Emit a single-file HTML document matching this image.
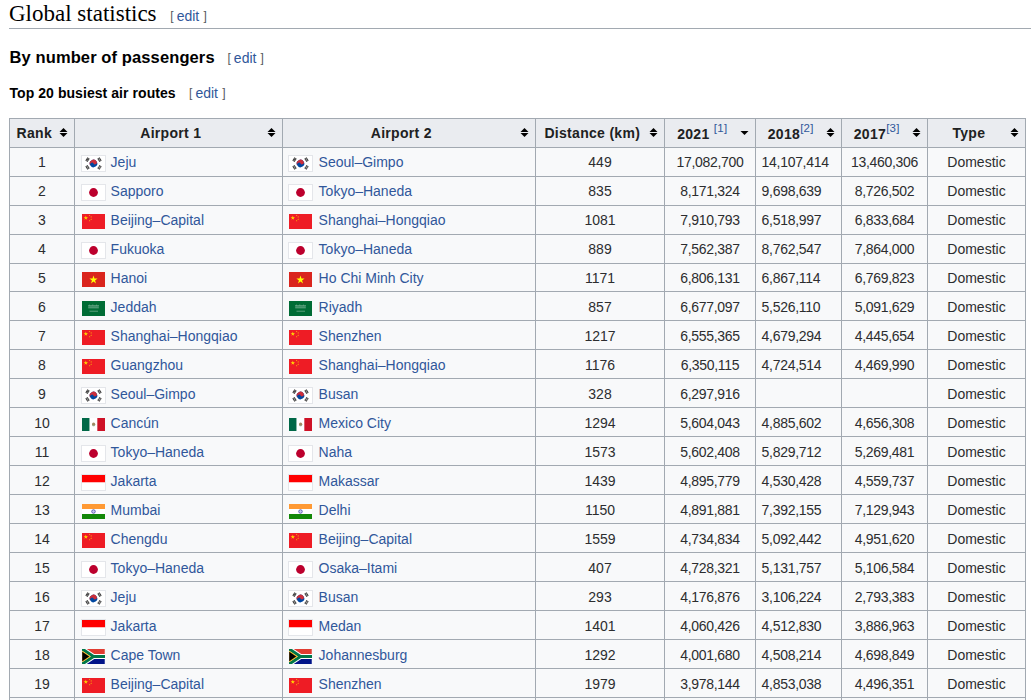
<!DOCTYPE html><html><head><meta charset="utf-8"><style>
html,body{margin:0;padding:0;background:#fff;}
body{width:1031px;height:700px;overflow:hidden;position:relative;font-family:"Liberation Sans",sans-serif;color:#202122;}
.h2{position:absolute;left:9px;top:0;width:1100px;height:28px;border-bottom:1px solid #a2a9b1;}
.h2 .t{position:absolute;left:0;top:0px;font-family:"Liberation Serif",serif;font-size:23px;line-height:28px;color:#000;white-space:nowrap;}
.es{position:absolute;font-size:14px;white-space:nowrap;color:#54595d;}
.es a{color:#30579a;text-decoration:none;}
.es .br{color:#54595d;font-size:12px;position:relative;top:-1px;}
.es .ed{margin-left:3px;}
.es .r{margin-left:4.2px;}
.h3{position:absolute;left:9.5px;top:45px;font-size:16.5px;letter-spacing:0.11px;font-weight:bold;color:#000;white-space:nowrap;line-height:24px;}
.h4{position:absolute;left:9.5px;top:83px;font-size:14px;letter-spacing:0.06px;font-weight:bold;color:#000;white-space:nowrap;line-height:20px;}
table{position:absolute;left:9px;top:117.85px;border-collapse:collapse;table-layout:fixed;width:1017px;background:#f8f9fa;font-size:14px;}
th,td{border:1px solid #a2a9b1;padding:0 5.6px;white-space:nowrap;overflow:hidden;}
th{background:#eaecf0;font-weight:bold;text-align:center;position:relative;padding-right:21px;height:27.94px;color:#202122;letter-spacing:0.3px;}
td{text-align:center;height:27.94px;line-height:22.4px;color:#2c2d2f;}
td.ap{text-align:left;}
td a{color:#30579a;text-decoration:none;}
.si{position:absolute;right:0;top:9.5px;}
.sd{position:absolute;right:0;top:12px;}
sup{font-size:11.5px;line-height:1;vertical-align:super;font-weight:normal;position:relative;top:-0.5px;}
sup a{color:#30579a;text-decoration:none;}
.fl{display:inline-block;width:25px;vertical-align:middle;position:relative;top:1px;margin-right:4px;}
.fl svg{display:block;margin:0 1px;}
.fl.b{width:23px;height:15px;border:1px solid #e4e6ea;}
.fl.b svg{margin:0;}
.num{letter-spacing:-0.3px;}
.c{position:relative;}
.o1{top:1px;}
.o2{top:2px;}
.fl.f1{top:2px;}
.a2 .c{margin-left:1px;}
td.l{text-align:left;}
.a3 .fl{margin-left:-1px;}
.a3 .c{margin-left:2px;}
</style></head><body>
<svg width="0" height="0" style="position:absolute">
<defs>
<symbol id="kr" viewBox="0 0 23 15">
<rect width="23" height="15" fill="#fff"/>
<g transform="rotate(-33.7 11.5 7.5)">
<circle cx="11.5" cy="7.5" r="3.75" fill="#0047a0"/>
<path d="M7.75 7.5 A3.75 3.75 0 0 1 11.5 3.75 A3.75 3.75 0 0 1 15.25 7.5 A1.875 1.875 0 0 1 13.375 9.375 A1.875 1.875 0 0 1 11.5 7.5 A1.875 1.875 0 0 0 9.625 5.625 A1.875 1.875 0 0 0 7.75 7.5Z" fill="#cd2e3a"/>
</g>
<g fill="#2a2a2a">
<g transform="translate(5.5 3.6) rotate(-56.3)"><rect x="-1.9" y="-1.3" width="3.8" height="0.78"/><rect x="-1.9" y="-0.39" width="3.8" height="0.78"/><rect x="-1.9" y="0.52" width="3.8" height="0.78"/></g>
<g transform="translate(17.5 3.6) rotate(56.3)"><rect x="-1.9" y="-1.3" width="3.8" height="0.78"/><rect x="-1.9" y="-0.39" width="1.7" height="0.78"/><rect x="0.2" y="-0.39" width="1.7" height="0.78"/><rect x="-1.9" y="0.52" width="3.8" height="0.78"/></g>
<g transform="translate(5.5 11.4) rotate(56.3)"><rect x="-1.9" y="-1.3" width="3.8" height="0.78"/><rect x="-1.9" y="-0.39" width="1.7" height="0.78"/><rect x="0.2" y="-0.39" width="1.7" height="0.78"/><rect x="-1.9" y="0.52" width="3.8" height="0.78"/></g>
<g transform="translate(17.5 11.4) rotate(-56.3)"><rect x="-1.9" y="-1.3" width="1.7" height="0.78"/><rect x="0.2" y="-1.3" width="1.7" height="0.78"/><rect x="-1.9" y="-0.39" width="1.7" height="0.78"/><rect x="0.2" y="-0.39" width="1.7" height="0.78"/><rect x="-1.9" y="0.52" width="1.7" height="0.78"/><rect x="0.2" y="0.52" width="1.7" height="0.78"/></g>
</g>
</symbol>
<symbol id="jp" viewBox="0 0 23 15">
<rect width="23" height="15" fill="#fff"/>
<circle cx="11.5" cy="7.5" r="4.4" fill="#bc002d"/>
</symbol>
<symbol id="cn" viewBox="0 0 23 15">
<rect width="23" height="15" fill="#ee1c25"/>
<path fill="#ffde00" d="M3.83 1.60 L4.35 3.19 L6.02 3.19 L4.67 4.17 L5.18 5.76 L3.83 4.78 L2.48 5.76 L2.99 4.17 L1.64 3.19 L3.31 3.19Z"/>
<path fill="#ffde00" d="M7.67 0.65 L7.86 1.24 L8.48 1.24 L7.98 1.60 L8.17 2.19 L7.67 1.82 L7.17 2.19 L7.36 1.60 L6.86 1.24 L7.48 1.24Z"/>
<path fill="#ffde00" d="M9.20 2.15 L9.39 2.74 L10.01 2.74 L9.51 3.10 L9.70 3.69 L9.20 3.32 L8.70 3.69 L8.89 3.10 L8.39 2.74 L9.01 2.74Z"/>
<path fill="#ffde00" d="M9.20 4.40 L9.39 4.99 L10.01 4.99 L9.51 5.35 L9.70 5.94 L9.20 5.57 L8.70 5.94 L8.89 5.35 L8.39 4.99 L9.01 4.99Z"/>
<path fill="#ffde00" d="M7.67 5.90 L7.86 6.49 L8.48 6.49 L7.98 6.85 L8.17 7.44 L7.67 7.07 L7.17 7.44 L7.36 6.85 L6.86 6.49 L7.48 6.49Z"/>
</symbol>
<symbol id="vn" viewBox="0 0 23 15">
<rect width="23" height="15" fill="#da251d"/>
<path fill="#ff0" d="M11.50 3.60 L12.47 6.57 L15.59 6.57 L13.06 8.41 L14.03 11.38 L11.50 9.54 L8.97 11.38 L9.94 8.41 L7.41 6.57 L10.53 6.57Z"/>
</symbol>
<symbol id="sa" viewBox="0 0 23 15">
<rect width="23" height="15" fill="#006c35"/>
<g fill="#fff" opacity="0.42">
<rect x="6" y="4.2" width="11" height="0.7"/>
<rect x="6.2" y="5.2" width="10.6" height="2.2" opacity="0.7"/>
<rect x="7" y="3.6" width="0.7" height="1.2"/>
<rect x="10.5" y="3.4" width="0.7" height="1.4"/>
<rect x="14" y="3.6" width="0.7" height="1.2"/>
</g>
<rect x="7.5" y="9.8" width="8.5" height="0.7" fill="#fff" opacity="0.5"/>
</symbol>
<symbol id="mx" viewBox="0 0 23 13">
<rect width="7.67" height="13" fill="#006847"/>
<rect x="7.67" width="7.66" height="13" fill="#fff"/>
<rect x="15.33" width="7.67" height="13" fill="#ce1126"/>
<circle cx="11.6" cy="6.2" r="1.6" fill="#8c6a3a" opacity="0.8"/>
<path d="M9.9 6.8 A1.7 1.7 0 0 0 13.3 6.8Z" fill="#7a9a78" opacity="0.52"/>
</symbol>
<symbol id="id" viewBox="0 0 23 15">
<rect width="23" height="7.5" fill="#ff0000"/>
<rect y="7.5" width="23" height="7.5" fill="#fff"/>
</symbol>
<symbol id="in" viewBox="0 0 23 15">
<rect width="23" height="5" fill="#ff9933"/>
<rect y="5" width="23" height="5" fill="#fff"/>
<rect y="10" width="23" height="5" fill="#138808"/>
<circle cx="11.5" cy="7.5" r="1.8" fill="#c8c8f0" stroke="#000080" stroke-width="0.5"/>
</symbol>
<symbol id="za" viewBox="0 0 90 60">
<rect width="90" height="30" fill="#e03c31"/>
<rect y="30" width="90" height="30" fill="#001489"/>
<path d="M-15 -10 L45 30 L-15 70 M45 30 H95" stroke="#fff" stroke-width="20" fill="none"/>
<path d="M-15 -10 L45 30 L-15 70 M45 30 H95" stroke="#007749" stroke-width="12" fill="none"/>
<path d="M0 7.2 L34.2 30 L0 52.8Z" fill="#ffb81c"/>
<path d="M0 11.4 L27.9 30 L0 48.6Z" fill="#000"/>
</symbol>
</defs></svg>
<div class="h2"><span class="t">Global statistics</span></div>
<div class="es" style="left:170.3px;top:8px;"><span class="br">[</span><a class="ed">edit</a><span class="br r">]</span></div>
<div class="h3">By number of passengers</div>
<div class="es" style="left:227.5px;top:50px;"><span class="br">[</span><a class="ed">edit</a><span class="br r">]</span></div>
<div class="h4">Top 20 busiest air routes</div>
<div class="es" style="left:189.1px;top:85px;"><span class="br">[</span><a class="ed">edit</a><span class="br r">]</span></div>
<table><colgroup><col style="width:65px"><col style="width:208px"><col style="width:253px"><col style="width:129px"><col style="width:91px"><col style="width:86px"><col style="width:86px"><col style="width:98px"></colgroup>
<tr><th>Rank<svg class="si" width="21" height="9" viewBox="0 0 21 9"><path d="M14.5 5l-4 4-4-4zM14.5 4l-4-4-4 4z"/></svg></th><th>Airport 1<svg class="si" width="21" height="9" viewBox="0 0 21 9"><path d="M14.5 5l-4 4-4-4zM14.5 4l-4-4-4 4z"/></svg></th><th>Airport 2<svg class="si" width="21" height="9" viewBox="0 0 21 9"><path d="M14.5 5l-4 4-4-4zM14.5 4l-4-4-4 4z"/></svg></th><th>Distance (km)<svg class="si" width="21" height="9" viewBox="0 0 21 9"><path d="M14.5 5l-4 4-4-4zM14.5 4l-4-4-4 4z"/></svg></th><th>2021 <sup><a>[1]</a></sup><svg class="sd" width="21" height="4" viewBox="0 0 21 4"><path d="M6.5 0h8l-4 4z"/></svg></th><th>2018<sup><a>[2]</a></sup><svg class="si" width="21" height="9" viewBox="0 0 21 9"><path d="M14.5 5l-4 4-4-4zM14.5 4l-4-4-4 4z"/></svg></th><th>2017<sup><a>[3]</a></sup><svg class="si" width="21" height="9" viewBox="0 0 21 9"><path d="M14.5 5l-4 4-4-4zM14.5 4l-4-4-4 4z"/></svg></th><th>Type<svg class="si" width="21" height="9" viewBox="0 0 21 9"><path d="M14.5 5l-4 4-4-4zM14.5 4l-4-4-4 4z"/></svg></th></tr>
<tr><td><span class="c o0">1</span></td><td class="ap a2"><span class="fl b"><svg width="23" height="15"><use href="#kr"/></svg></span><span class="c o0"><a>Jeju</a></span></td><td class="ap a3"><span class="fl b"><svg width="23" height="15"><use href="#kr"/></svg></span><span class="c o0"><a>Seoul–Gimpo</a></span></td><td><span class="c o0">449</span></td><td class="num"><span class="c o0">17,082,700</span></td><td class="num l"><span class="c o0">14,107,414</span></td><td class="num"><span class="c o0">13,460,306</span></td><td><span class="c o0">Domestic</span></td></tr>
<tr><td><span class="c o1">2</span></td><td class="ap a2"><span class="fl b"><svg width="23" height="15"><use href="#jp"/></svg></span><span class="c o1"><a>Sapporo</a></span></td><td class="ap a3"><span class="fl b"><svg width="23" height="15"><use href="#jp"/></svg></span><span class="c o1"><a>Tokyo–Haneda</a></span></td><td><span class="c o1">835</span></td><td class="num"><span class="c o1">8,171,324</span></td><td class="num l"><span class="c o1">9,698,639</span></td><td class="num"><span class="c o1">8,726,502</span></td><td><span class="c o1">Domestic</span></td></tr>
<tr><td><span class="c o1">3</span></td><td class="ap a2"><span class="fl"><svg width="23" height="15"><use href="#cn"/></svg></span><span class="c o1"><a>Beijing–Capital</a></span></td><td class="ap a3"><span class="fl"><svg width="23" height="15"><use href="#cn"/></svg></span><span class="c o1"><a>Shanghai–Hongqiao</a></span></td><td><span class="c o1">1081</span></td><td class="num"><span class="c o1">7,910,793</span></td><td class="num l"><span class="c o1">6,518,997</span></td><td class="num"><span class="c o1">6,833,684</span></td><td><span class="c o1">Domestic</span></td></tr>
<tr><td><span class="c o1">4</span></td><td class="ap a2"><span class="fl b"><svg width="23" height="15"><use href="#jp"/></svg></span><span class="c o1"><a>Fukuoka</a></span></td><td class="ap a3"><span class="fl b"><svg width="23" height="15"><use href="#jp"/></svg></span><span class="c o1"><a>Tokyo–Haneda</a></span></td><td><span class="c o1">889</span></td><td class="num"><span class="c o1">7,562,387</span></td><td class="num l"><span class="c o1">8,762,547</span></td><td class="num"><span class="c o1">7,864,000</span></td><td><span class="c o1">Domestic</span></td></tr>
<tr><td><span class="c o1">5</span></td><td class="ap a2"><span class="fl"><svg width="23" height="15"><use href="#vn"/></svg></span><span class="c o1"><a>Hanoi</a></span></td><td class="ap a3"><span class="fl"><svg width="23" height="15"><use href="#vn"/></svg></span><span class="c o1"><a>Ho Chi Minh City</a></span></td><td><span class="c o1">1171</span></td><td class="num"><span class="c o1">6,806,131</span></td><td class="num l"><span class="c o1">6,867,114</span></td><td class="num"><span class="c o1">6,769,823</span></td><td><span class="c o1">Domestic</span></td></tr>
<tr><td><span class="c o1">6</span></td><td class="ap a2"><span class="fl"><svg width="23" height="15"><use href="#sa"/></svg></span><span class="c o1"><a>Jeddah</a></span></td><td class="ap a3"><span class="fl"><svg width="23" height="15"><use href="#sa"/></svg></span><span class="c o1"><a>Riyadh</a></span></td><td><span class="c o1">857</span></td><td class="num"><span class="c o1">6,677,097</span></td><td class="num l"><span class="c o1">5,526,110</span></td><td class="num"><span class="c o1">5,091,629</span></td><td><span class="c o1">Domestic</span></td></tr>
<tr><td><span class="c o1">7</span></td><td class="ap a2"><span class="fl"><svg width="23" height="15"><use href="#cn"/></svg></span><span class="c o1"><a>Shanghai–Hongqiao</a></span></td><td class="ap a3"><span class="fl"><svg width="23" height="15"><use href="#cn"/></svg></span><span class="c o1"><a>Shenzhen</a></span></td><td><span class="c o1">1217</span></td><td class="num"><span class="c o1">6,555,365</span></td><td class="num l"><span class="c o1">4,679,294</span></td><td class="num"><span class="c o1">4,445,654</span></td><td><span class="c o1">Domestic</span></td></tr>
<tr><td><span class="c o1">8</span></td><td class="ap a2"><span class="fl"><svg width="23" height="15"><use href="#cn"/></svg></span><span class="c o1"><a>Guangzhou</a></span></td><td class="ap a3"><span class="fl"><svg width="23" height="15"><use href="#cn"/></svg></span><span class="c o1"><a>Shanghai–Hongqiao</a></span></td><td><span class="c o1">1176</span></td><td class="num"><span class="c o1">6,350,115</span></td><td class="num l"><span class="c o1">4,724,514</span></td><td class="num"><span class="c o1">4,469,990</span></td><td><span class="c o1">Domestic</span></td></tr>
<tr><td><span class="c o1">9</span></td><td class="ap a2"><span class="fl b"><svg width="23" height="15"><use href="#kr"/></svg></span><span class="c o1"><a>Seoul–Gimpo</a></span></td><td class="ap a3"><span class="fl b"><svg width="23" height="15"><use href="#kr"/></svg></span><span class="c o1"><a>Busan</a></span></td><td><span class="c o1">328</span></td><td class="num"><span class="c o1">6,297,916</span></td><td class="num l"><span class="c o1"></span></td><td class="num"><span class="c o1"></span></td><td><span class="c o1">Domestic</span></td></tr>
<tr><td><span class="c o1">10</span></td><td class="ap a2"><span class="fl"><svg width="23" height="13"><use href="#mx"/></svg></span><span class="c o1"><a>Cancún</a></span></td><td class="ap a3"><span class="fl"><svg width="23" height="13"><use href="#mx"/></svg></span><span class="c o1"><a>Mexico City</a></span></td><td><span class="c o1">1294</span></td><td class="num"><span class="c o1">5,604,043</span></td><td class="num l"><span class="c o1">4,885,602</span></td><td class="num"><span class="c o1">4,656,308</span></td><td><span class="c o1">Domestic</span></td></tr>
<tr><td><span class="c o1">11</span></td><td class="ap a2"><span class="fl b"><svg width="23" height="15"><use href="#jp"/></svg></span><span class="c o1"><a>Tokyo–Haneda</a></span></td><td class="ap a3"><span class="fl b"><svg width="23" height="15"><use href="#jp"/></svg></span><span class="c o1"><a>Naha</a></span></td><td><span class="c o1">1573</span></td><td class="num"><span class="c o1">5,602,408</span></td><td class="num l"><span class="c o1">5,829,712</span></td><td class="num"><span class="c o1">5,269,481</span></td><td><span class="c o1">Domestic</span></td></tr>
<tr><td><span class="c o1">12</span></td><td class="ap a2"><span class="fl b"><svg width="23" height="15"><use href="#id"/></svg></span><span class="c o1"><a>Jakarta</a></span></td><td class="ap a3"><span class="fl b"><svg width="23" height="15"><use href="#id"/></svg></span><span class="c o1"><a>Makassar</a></span></td><td><span class="c o1">1439</span></td><td class="num"><span class="c o1">4,895,779</span></td><td class="num l"><span class="c o1">4,530,428</span></td><td class="num"><span class="c o1">4,559,737</span></td><td><span class="c o1">Domestic</span></td></tr>
<tr><td><span class="c o1">13</span></td><td class="ap a2"><span class="fl"><svg width="23" height="15"><use href="#in"/></svg></span><span class="c o1"><a>Mumbai</a></span></td><td class="ap a3"><span class="fl"><svg width="23" height="15"><use href="#in"/></svg></span><span class="c o1"><a>Delhi</a></span></td><td><span class="c o1">1150</span></td><td class="num"><span class="c o1">4,891,881</span></td><td class="num l"><span class="c o1">7,392,155</span></td><td class="num"><span class="c o1">7,129,943</span></td><td><span class="c o1">Domestic</span></td></tr>
<tr><td><span class="c o1">14</span></td><td class="ap a2"><span class="fl"><svg width="23" height="15"><use href="#cn"/></svg></span><span class="c o1"><a>Chengdu</a></span></td><td class="ap a3"><span class="fl"><svg width="23" height="15"><use href="#cn"/></svg></span><span class="c o1"><a>Beijing–Capital</a></span></td><td><span class="c o1">1559</span></td><td class="num"><span class="c o1">4,734,834</span></td><td class="num l"><span class="c o1">5,092,442</span></td><td class="num"><span class="c o1">4,951,620</span></td><td><span class="c o1">Domestic</span></td></tr>
<tr><td><span class="c o1">15</span></td><td class="ap a2"><span class="fl b f1"><svg width="23" height="15"><use href="#jp"/></svg></span><span class="c o1"><a>Tokyo–Haneda</a></span></td><td class="ap a3"><span class="fl b f1"><svg width="23" height="15"><use href="#jp"/></svg></span><span class="c o1"><a>Osaka–Itami</a></span></td><td><span class="c o1">407</span></td><td class="num"><span class="c o1">4,728,321</span></td><td class="num l"><span class="c o1">5,131,757</span></td><td class="num"><span class="c o1">5,106,584</span></td><td><span class="c o1">Domestic</span></td></tr>
<tr><td><span class="c o1">16</span></td><td class="ap a2"><span class="fl b f1"><svg width="23" height="15"><use href="#kr"/></svg></span><span class="c o1"><a>Jeju</a></span></td><td class="ap a3"><span class="fl b f1"><svg width="23" height="15"><use href="#kr"/></svg></span><span class="c o1"><a>Busan</a></span></td><td><span class="c o1">293</span></td><td class="num"><span class="c o1">4,176,876</span></td><td class="num l"><span class="c o1">3,106,224</span></td><td class="num"><span class="c o1">2,793,383</span></td><td><span class="c o1">Domestic</span></td></tr>
<tr><td><span class="c o1">17</span></td><td class="ap a2"><span class="fl b f1"><svg width="23" height="15"><use href="#id"/></svg></span><span class="c o1"><a>Jakarta</a></span></td><td class="ap a3"><span class="fl b f1"><svg width="23" height="15"><use href="#id"/></svg></span><span class="c o1"><a>Medan</a></span></td><td><span class="c o1">1401</span></td><td class="num"><span class="c o1">4,060,426</span></td><td class="num l"><span class="c o1">4,512,830</span></td><td class="num"><span class="c o1">3,886,963</span></td><td><span class="c o1">Domestic</span></td></tr>
<tr><td><span class="c o2">18</span></td><td class="ap a2"><span class="fl f1"><svg width="23" height="15"><use href="#za"/></svg></span><span class="c o2"><a>Cape Town</a></span></td><td class="ap a3"><span class="fl f1"><svg width="23" height="15"><use href="#za"/></svg></span><span class="c o2"><a>Johannesburg</a></span></td><td><span class="c o2">1292</span></td><td class="num"><span class="c o2">4,001,680</span></td><td class="num l"><span class="c o2">4,508,214</span></td><td class="num"><span class="c o2">4,698,849</span></td><td><span class="c o2">Domestic</span></td></tr>
<tr><td><span class="c o2">19</span></td><td class="ap a2"><span class="fl f1"><svg width="23" height="15"><use href="#cn"/></svg></span><span class="c o2"><a>Beijing–Capital</a></span></td><td class="ap a3"><span class="fl f1"><svg width="23" height="15"><use href="#cn"/></svg></span><span class="c o2"><a>Shenzhen</a></span></td><td><span class="c o2">1979</span></td><td class="num"><span class="c o2">3,978,144</span></td><td class="num l"><span class="c o2">4,853,038</span></td><td class="num"><span class="c o2">4,496,351</span></td><td><span class="c o2">Domestic</span></td></tr>
<tr><td><span class="c o2">20</span></td><td class="ap a2"><span class="fl b f1"><svg width="23" height="15"><use href="#jp"/></svg></span><span class="c o2"><a>Osaka–Itami</a></span></td><td class="ap a3"><span class="fl b f1"><svg width="23" height="15"><use href="#jp"/></svg></span><span class="c o2"><a>Tokyo–Haneda</a></span></td><td><span class="c o2">407</span></td><td class="num"><span class="c o2">3,900,000</span></td><td class="num l"><span class="c o2">3,900,000</span></td><td class="num"><span class="c o2">3,900,000</span></td><td><span class="c o2">Domestic</span></td></tr>
</table></body></html>
